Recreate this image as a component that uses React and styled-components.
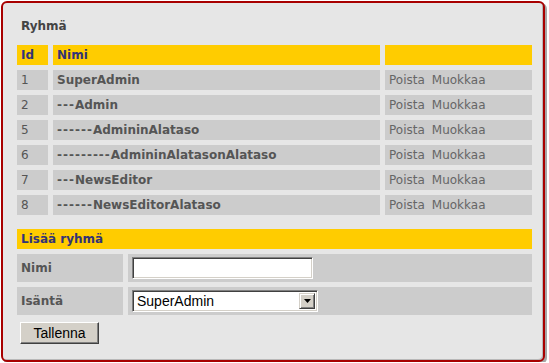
import styled, { createGlobalStyle } from "styled-components";

const GlobalStyle = createGlobalStyle`
  html, body {
    margin: 0;
    padding: 0;
    background: #ffffff;
  }
  body {
    font-family: "DejaVu Sans", Verdana, sans-serif;
  }
`;

// split "---Admin" into its indent dashes and the name
function splitName(name) {
  const match = name.match(/^(-*)(.*)$/);
  return { dashes: match[1], rest: match[2] };
}

export default function App() {
  const groups = [
    { id: "1", name: "SuperAdmin" },
    { id: "2", name: "---Admin" },
    { id: "5", name: "------AdmininAlataso" },
    { id: "6", name: "---------AdmininAlatasonAlataso" },
    { id: "7", name: "---NewsEditor" },
    { id: "8", name: "------NewsEditorAlataso" },
  ];

  return (
    <>
      <GlobalStyle />
      <Frame>
        <Title>Ryhmä</Title>
        <GroupTable>
          <HeadCell>Id</HeadCell>
          <HeadCell>Nimi</HeadCell>
          <HeadCell />
          {groups.map((group) => {
            const { dashes, rest } = splitName(group.name);
            return (
              <Row key={group.id}>
                <Cell>{group.id}</Cell>
                <Cell bold>
                  {dashes && <Dashes>{dashes}</Dashes>}
                  {rest}
                </Cell>
                <Cell>
                  <Actions>
                    <ActionLink>Poista</ActionLink>
                    <ActionLink>Muokkaa</ActionLink>
                  </Actions>
                </Cell>
              </Row>
            );
          })}
        </GroupTable>

        <FormTitle>Lisää ryhmä</FormTitle>
        <FormTable>
          <Label>Nimi</Label>
          <FieldCell>
            <TextInput type="text" defaultValue="" />
          </FieldCell>
          <Label>Isäntä</Label>
          <FieldCell>
            <SelectBox>
              <Select defaultValue="SuperAdmin">
                {groups.map((group) => (
                  <option key={group.id} value={group.name}>
                    {group.name}
                  </option>
                ))}
              </Select>
              <ArrowButton>
                <svg width="7" height="4" viewBox="0 0 7 4">
                  <path d="M0 0h7L3.5 4z" fill="#000" />
                </svg>
              </ArrowButton>
            </SelectBox>
          </FieldCell>
        </FormTable>
        <SaveButton>Tallenna</SaveButton>
      </Frame>
    </>
  );
}

const Frame = styled.div`
  box-sizing: border-box;
  width: 544px;
  height: 361px;
  margin: 1px 0 0 1px;
  padding: 16px 11px 0 14px;

  background: #e6e6e6;
  border: 2px solid #a80000;
  border-radius: 6px;
  box-shadow: 2px 2px 0 #a6a6a6, inset -1px -1px 0 #b8b8b8;
`;

const Title = styled.div`
  height: 15px;
  padding-left: 4px;
  line-height: 15px;
  font-size: 12px;
  font-weight: 700;
  color: #444444;
  margin-bottom: 11px;
`;

const GroupTable = styled.div`
  display: grid;
  grid-template-columns: 31px 327px 147px;
  grid-auto-rows: 20px;
  column-gap: 5px;
  row-gap: 5px;
`;

const Row = styled.div`
  display: contents;
`;

const HeadCell = styled.div`
  background: #ffcc00;
  padding: 0 4px;
  line-height: 20px;
  font-size: 12px;
  font-weight: 700;
  color: #333377;
`;

const Cell = styled.div`
  background: #cccccc;
  padding: 1px 4px 0 4px;
  line-height: 19px;
  font-size: 12px;
  font-weight: ${(p) => (p.bold ? 700 : 400)};
  color: #555555;
  white-space: nowrap;
  overflow: hidden;
`;

const Dashes = styled.span`
  letter-spacing: 1px;
`;

const Actions = styled.div`
  display: flex;
  gap: 7px;
`;

const ActionLink = styled.span`
  color: #666666;
  cursor: pointer;
`;

const FormTitle = styled.div`
  margin-top: 14px;
  width: 515px;
  height: 20px;
  padding: 0 4px;
  box-sizing: border-box;
  background: #ffcc00;
  line-height: 20px;
  font-size: 12px;
  font-weight: 700;
  color: #333377;
`;

const FormTable = styled.div`
  margin-top: 5px;
  display: grid;
  grid-template-columns: 106px 404px;
  grid-auto-rows: 28px;
  column-gap: 5px;
  row-gap: 5px;
`;

const Label = styled.div`
  background: #cccccc;
  padding: 0 4px;
  line-height: 28px;
  font-size: 12px;
  font-weight: 700;
  color: #555555;
`;

const FieldCell = styled.div`
  background: #cccccc;
  padding: 3px 4px;
  display: flex;
  align-items: flex-start;
`;

const TextInput = styled.input`
  box-sizing: border-box;
  width: 181px;
  height: 22px;
  margin: 0;
  padding: 1px 3px;
  background: #ffffff;
  border: 1px solid;
  border-color: #808080 #ffffff #ffffff #808080;
  box-shadow: inset 1px 1px 0 #404040, inset -1px -1px 0 #d4d0c8;
  font-family: "Liberation Sans", Arial, sans-serif;
  font-size: 14px;
  outline: none;
`;

const SelectBox = styled.div`
  box-sizing: border-box;
  width: 186px;
  height: 22px;
  display: flex;
  align-items: stretch;
  padding: 2px;
  background: #ffffff;
  border: 1px solid;
  border-color: #808080 #ffffff #ffffff #808080;
  box-shadow: inset 1px 1px 0 #404040, inset -1px -1px 0 #d4d0c8;
`;

const Select = styled.select`
  flex: 1;
  min-width: 0;
  appearance: none;
  -webkit-appearance: none;
  border: none;
  margin: 0;
  padding: 0 2px;
  background: #ffffff;
  font-family: "Liberation Sans", Arial, sans-serif;
  font-size: 14px;
  color: #000000;
  outline: none;
`;

const ArrowButton = styled.div`
  box-sizing: border-box;
  width: 16px;
  display: flex;
  align-items: center;
  justify-content: center;
  background: #d4d0c8;
  border: 1px solid;
  border-color: #d4d0c8 #404040 #404040 #d4d0c8;
  box-shadow: inset 1px 1px 0 #ffffff, inset -1px -1px 0 #808080;
`;

const SaveButton = styled.button`
  box-sizing: border-box;
  margin: 7px 0 0 3px;
  width: 79px;
  height: 22px;
  padding: 0;
  background: #d4d0c8;
  border: 1px solid;
  border-color: #ffffff #404040 #404040 #ffffff;
  box-shadow: inset -1px -1px 0 #808080;
  font-family: "Liberation Sans", Arial, sans-serif;
  font-size: 14px;
  color: #000000;
  cursor: pointer;
`;
